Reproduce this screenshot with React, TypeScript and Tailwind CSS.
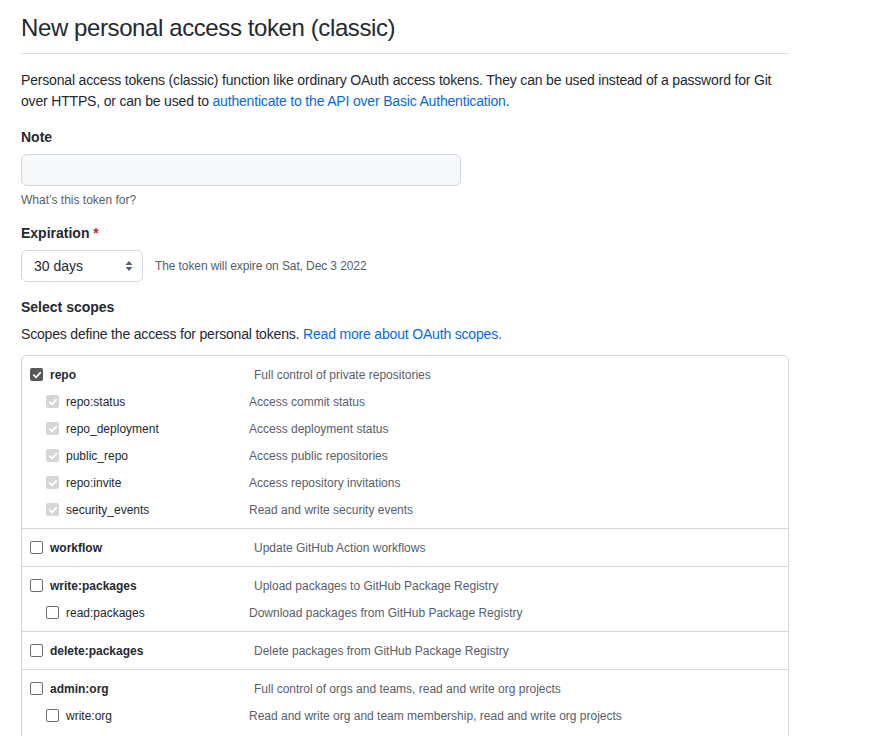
import React from 'react';

type Scope = {
  name: string;
  description: string;
  checked?: boolean;
  children?: { name: string; description: string; checked?: boolean }[];
};

const scopes: Scope[] = [
  {
    name: 'repo',
    description: 'Full control of private repositories',
    checked: true,
    children: [
      { name: 'repo:status', description: 'Access commit status', checked: true },
      { name: 'repo_deployment', description: 'Access deployment status', checked: true },
      { name: 'public_repo', description: 'Access public repositories', checked: true },
      { name: 'repo:invite', description: 'Access repository invitations', checked: true },
      { name: 'security_events', description: 'Read and write security events', checked: true }
    ]
  },
  { name: 'workflow', description: 'Update GitHub Action workflows' },
  {
    name: 'write:packages',
    description: 'Upload packages to GitHub Package Registry',
    children: [{ name: 'read:packages', description: 'Download packages from GitHub Package Registry' }]
  },
  { name: 'delete:packages', description: 'Delete packages from GitHub Package Registry' },
  {
    name: 'admin:org',
    description: 'Full control of orgs and teams, read and write org projects',
    children: [
      { name: 'write:org', description: 'Read and write org and team membership, read and write org projects' },
      { name: 'read:org', description: 'Read org and team membership, read org projects' },
      { name: 'manage_runners:org', description: 'Manage org runners and runner groups' }
    ]
  }
];

const Check = ({ checked, disabled }: { checked?: boolean; disabled?: boolean }) => {
  if (!checked) {
    return <span className="w-[13px] h-[13px] shrink-0 rounded-[2px] border border-[#6e6e6e] bg-white" />;
  }
  return (
    <span
      className={`w-[13px] h-[13px] shrink-0 rounded-[2px] flex items-center justify-center ${
        disabled ? 'bg-[#d6d6d6]' : 'bg-[#585858]'
      }`}
    >
      <svg width="10" height="10" viewBox="0 0 10 10" fill="none">
        <path d="M1.8 5.2 L4 7.3 L8.3 2.6" stroke="white" strokeWidth="1.8" strokeLinecap="round" strokeLinejoin="round" />
      </svg>
    </span>
  );
};

const SortArrows = () => (
  <svg width="8" height="12" viewBox="0 0 8 12" fill="#57606a">
    <path d="M4 1 L7.5 5 H0.5 Z" />
    <path d="M4 11 L7.5 7 H0.5 Z" />
  </svg>
);

const App = () => {
  return (
    <div className="min-h-screen bg-white text-[#24292f] font-['Segoe_UI','Liberation_Sans',sans-serif]">
      <div className="w-[768px] ml-[21px] pt-[10px]">
        <h1 className="text-[24px] leading-[36px] font-normal tracking-[-0.4px] pb-[7px] border-b border-[#d8dee4]">
          New personal access token (classic)
        </h1>

        <p className="mt-4 text-[14px] leading-[21px] tracking-[-0.18px]">
          Personal access tokens (classic) function like ordinary OAuth access tokens. They can be used instead of a password for Git
          <br />
          over HTTPS, or can be used to{' '}
          <a className="text-[#0969da]" href="#">
            authenticate to the API over Basic Authentication
          </a>
          .
        </p>

        <div className="mt-[15px] text-[14px] leading-[21px] font-semibold">Note</div>
        <div className="mt-[6px] w-[440px] h-[32px] rounded-[6px] border border-[#d0d7de] bg-[#f6f8fa]" />
        <div className="mt-[5px] text-[12px] leading-[18px] text-[#57606a]">What’s this token for?</div>

        <div className="mt-[14px] text-[14px] leading-[21px] font-semibold">
          Expiration <span className="text-[#cf222e]">*</span>
        </div>
        <div className="mt-[6px] flex items-center gap-3">
          <div className="w-[122px] h-[32px] rounded-[6px] border border-[#d0d7de] bg-white flex items-center justify-between pl-3 pr-[9px] text-[14px]">
            <span>30 days</span>
            <SortArrows />
          </div>
          <span className="text-[12px] text-[#57606a] tracking-[-0.1px]">The token will expire on Sat, Dec 3 2022</span>
        </div>

        <div className="mt-[15px] text-[14px] leading-[21px] font-semibold">Select scopes</div>
        <p className="mt-[6px] text-[14px] leading-[21px] tracking-[-0.18px]">
          Scopes define the access for personal tokens.{' '}
          <a className="text-[#0969da]" href="#">
            Read more about OAuth scopes.
          </a>
        </p>

        <div className="mt-[10px] border border-[#d0d7de] rounded-[6px] text-[12px]">
          {scopes.map((scope, i) => (
            <div key={scope.name} className={`py-[5px] pl-2 ${i > 0 ? 'border-t border-[#d0d7de]' : ''}`}>
              <div className="h-[27px] flex items-center">
                <div className="w-[224px] flex items-center gap-[7px]">
                  <Check checked={scope.checked} />
                  <span className="font-semibold">{scope.name}</span>
                </div>
                <span className="text-[#57606a]">{scope.description}</span>
              </div>
              {scope.children?.map((child) => (
                <div key={child.name} className="h-[27px] flex items-center pl-4">
                  <div className="w-[203px] flex items-center gap-[7px]">
                    <Check checked={child.checked} disabled={child.checked} />
                    <span>{child.name}</span>
                  </div>
                  <span className="text-[#57606a]">{child.description}</span>
                </div>
              ))}
            </div>
          ))}
        </div>
      </div>
    </div>
  );
};

export default App;
